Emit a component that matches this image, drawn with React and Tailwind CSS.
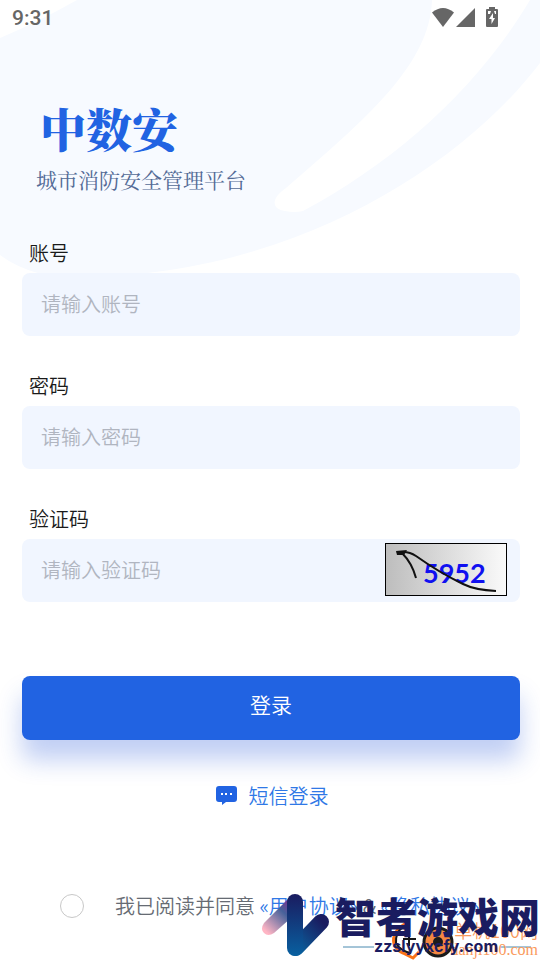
import React, { useState } from "react";

const fields = [
	{ id: "account", label: "账号", placeholder: "请输入账号", type: "text" },
	{ id: "password", label: "密码", placeholder: "请输入密码", type: "password" },
	{ id: "captcha", label: "验证码", placeholder: "请输入验证码", type: "text" },
];

function Backdrop() {
	return (
		<svg
			className="absolute inset-x-0 top-0 -z-10 w-full"
			viewBox="0 0 540 290"
			aria-hidden="true"
		>
			<path
				d="M0 38Q38 22 77 0H540V63C470 155 330 250 155 272Q95 281 38 273Q16 267 0 255Z"
				fill="#f7faff"
			/>
			<path
				d="M432 0C430 65 365 120 286 188C270 199 272 209 285 211Q295 213 303 211C395 162 478 88 530 0Z"
				fill="#fff"
			/>
		</svg>
	);
}

function StatusBar() {
	return (
		<div className="flex h-9 items-center justify-between pl-3 pr-10 pt-0.5 text-[#666]">
			<span className="font-['Roboto',sans-serif] text-[21px] font-medium">9:31</span>
			<div className="flex items-center pb-1">
				<svg width="24" height="20" viewBox="0 0 24 20" fill="currentColor">
					<path d="M11 20L0 5.500Q11 -3.500 22 5.500Z" />
				</svg>
				<svg width="20" height="20" viewBox="0 0 20 20" fill="currentColor">
					<path d="M0 20H19V1Z" />
				</svg>
				<svg className="ml-2" width="16" height="20" viewBox="0 0 16 20">
					<path
						d="M5 0H11V2H13Q14 2 14 3V19Q14 20 13 20H3Q2 20 2 19V3Q2 2 3 2H5Z"
						fill="currentColor"
					/>
					<path
						d="M9 6L5 12H7.500V17L11 11H9ZM4 4H7L6 7H4ZM10 4H12V7H11Z"
						fill="#fff"
					/>
				</svg>
			</div>
		</div>
	);
}

function CaptchaImage() {
	return (
		<svg width="122" height="53" viewBox="0 0 122 53">
			<defs>
				<linearGradient id="captchaBg">
					<stop offset="0" stopColor="#bdbdbd" />
					<stop offset="1" stopColor="#fafafa" />
				</linearGradient>
			</defs>
			<rect
				x="0.5"
				y="0.5"
				width="121"
				height="52"
				fill="url(#captchaBg)"
				stroke="#000"
			/>
			<text
				x="38"
				y="40"
				fontFamily="Lato, sans-serif"
				fontSize="27"
				fontWeight="700"
				fill="#1010f0"
			>
				5952
			</text>
			<path
				d="M31 35Q27 20 17 10M12 10Q22 7 31 13Q55 30 78 41Q90 47 111 48"
				fill="none"
				stroke="#111"
				strokeWidth="2"
			/>
			<path d="M11 8L22 7L19 12L12 12Z" fill="#111" />
		</svg>
	);
}

function Watermark() {
	return (
		<div className="pointer-events-none absolute bottom-0 right-0 h-[72px] w-[280px]">
			<svg className="absolute inset-0" width="280" height="72" viewBox="260 888 280 72">
				<defs>
					<linearGradient id="markLeft" x1="0" y1="1" x2="1" y2="0">
						<stop offset="0.1" stopColor="#ffb5c4" />
						<stop offset="0.6" stopColor="#46619a" />
						<stop offset="1" stopColor="#a0128c" />
					</linearGradient>
					<linearGradient id="markMain" x1="0" y1="1" x2="0" y2="0">
						<stop offset="0" stopColor="#0860a0" />
						<stop offset="1" stopColor="#1a1c60" />
					</linearGradient>
					<linearGradient
						id="markRight"
						gradientUnits="userSpaceOnUse"
						x1="296"
						y1="948"
						x2="322"
						y2="922"
					>
						<stop offset="0" stopColor="#0b609c" />
						<stop offset="1" stopColor="#1a1c60" />
					</linearGradient>
				</defs>
				<path
					d="M264 923L288 899L300 910L274 933Q268 937 264 933Q260 929 264 923Z"
					fill="url(#markLeft)"
				/>
				<path
					d="M296 948L321 922"
					stroke="url(#markRight)"
					strokeWidth="16"
					strokeLinecap="round"
				/>
				<rect x="287" y="894" width="16" height="62" rx="8" fill="url(#markMain)" />
				<path d="M343 947H374M500 947H531" stroke="#4a8ab0" />
				<path
					d="M408 922Q391 931 394 944Q397 951 403 953L413 958L419 952"
					fill="none"
					stroke="#f97316"
					strokeWidth="3"
				/>
				<path
					d="M403 927Q395 933 396 943Q400 951 411 953M403 939H416M409 933V946"
					fill="none"
					stroke="#161616"
					strokeWidth="2"
				/>
				<circle cx="438" cy="942" r="14" fill="#f58742" stroke="#1b1b1b" strokeWidth="3" />
				<circle cx="438" cy="942" r="5" fill="#1b1b1b" />
			</svg>
			<div className="absolute right-0.5 top-8 text-right text-[#fa9a5c]">
				<p className="text-lg leading-5">单机100网</p>
				<p className="font-['Liberation_Serif',serif] text-base leading-5">danji100.com</p>
			</div>
			<p className="absolute right-0 top-0.5 whitespace-nowrap text-[41px] font-black leading-[50px] text-[#1a1c60]">
				智者游戏网
			</p>
			<p className="absolute left-[114px] top-12 font-['Inter',sans-serif] text-base font-bold leading-5 text-[#1a1c60]">
				zzslyyxcfy.com
			</p>
		</div>
	);
}

function App() {
	const [form, setForm] = useState({ account: "", password: "", captcha: "" });
	const [agreed, setAgreed] = useState(false);

	return (
		<div className="relative isolate min-h-screen overflow-hidden bg-white font-['Noto_Sans_CJK_SC',sans-serif] text-[20px] font-[350]">
			<Backdrop />
			<StatusBar />

			<header className="px-9 pt-[61px]">
				<h1 className="pl-1 font-['Noto_Serif_CJK_SC','Noto_Sans_CJK_SC',serif] text-[46px] font-black leading-[60px] text-[#2163e2]">
					中数安
				</h1>
				<p className="mt-1.5 font-['Noto_Serif_CJK_SC','Noto_Sans_CJK_SC',serif] text-[21px] font-normal leading-8 text-[#536a96]">
					城市消防安全管理平台
				</p>
			</header>

			<form className="px-5 pl-[22px] pt-11" onSubmit={(e) => e.preventDefault()}>
				<div className="space-y-9">
					{fields.map((field) => (
						<div key={field.id}>
							<label
								htmlFor={field.id}
								className="block pb-1.5 pl-[7px] leading-7 text-[#1a1a1a]"
							>
								{field.label}
							</label>
							<div className="flex h-[63px] items-center rounded-lg bg-[#f1f6ff] pb-0.5 pl-[19px] pr-[13px]">
								<input
									id={field.id}
									type={field.type}
									placeholder={field.placeholder}
									value={form[field.id]}
									onChange={(e) =>
										setForm({ ...form, [field.id]: e.target.value })
									}
									className="min-w-0 flex-1 bg-transparent outline-none placeholder:text-[#b0b5c0]"
								/>
								{field.id === "captcha" && (
									<button type="button" aria-label="刷新验证码">
										<CaptchaImage />
									</button>
								)}
							</div>
						</div>
					))}
				</div>

				<button
					type="submit"
					className="mt-[74px] h-16 w-full rounded-lg bg-[#2163e2] pb-1.5 text-[21px] text-white shadow-[0_20px_24px_0_rgba(33,83,216,0.28)]"
				>
					登录
				</button>
			</form>

			<div className="mt-[41px] flex justify-center pl-1">
				<button type="button" className="flex items-center gap-3 text-[#2f78e6]">
					<svg width="21" height="20" viewBox="0 0 21 20">
						<path
							d="M3 0H18Q21 0 21 3V13Q21 16 18 16H10L6 19V16H3Q0 16 0 13V3Q0 0 3 0Z"
							fill="#2163e2"
						/>
						<path d="M5 7H7V9H5ZM9 7H11V9H9ZM14 7H16V9H14Z" fill="#fff" />
					</svg>
					短信登录
				</button>
			</div>

			<div className="mt-20 flex items-center pl-[60px]">
				<input
					id="agree"
					type="checkbox"
					checked={agreed}
					onChange={(e) => setAgreed(e.target.checked)}
					className="size-6 appearance-none rounded-full border border-[#c8c8c8] bg-white checked:bg-[#2163e2]"
				/>
				<p className="whitespace-nowrap pl-[31px] text-[#666b73]">
					<label htmlFor="agree">我已阅读并同意</label>{" "}
					<a href="#terms" className="text-[#2f78e6]">«用户协议»</a>
					{" & "}
					<a href="#privacy" className="text-[#2f78e6]">«隐私协议»</a>
				</p>
			</div>

			<Watermark />
		</div>
	);
}

export default App;
